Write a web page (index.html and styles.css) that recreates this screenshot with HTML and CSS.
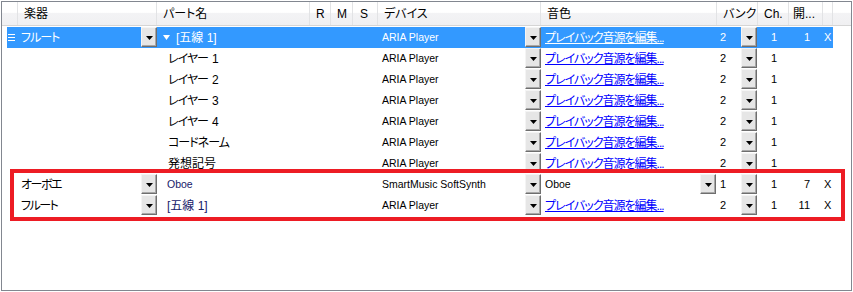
FILE: index.html
```html
<!DOCTYPE html>
<html lang="ja">
<head>
<meta charset="utf-8">
<link rel="stylesheet" href="styles.css">
</head>
<body>
<div class="grid-view">
  <div class="header">
    <div class="hc"></div>
    <div class="hc">楽器</div>
    <div class="hc">パート名</div>
    <div class="hc">R</div>
    <div class="hc">M</div>
    <div class="hc s">S</div>
    <div class="hc">デバイス</div>
    <div class="hc">音色</div>
    <div class="hc">バンク</div>
    <div class="hc">Ch.</div>
    <div class="hc narrow">開...</div>
    <div class="hc"></div>
    <div class="hc last"></div>
  </div>

  <div class="rows">
    <div class="row selected">
      <div class="cell inst"><svg class="grip" width="7" height="7" viewBox="0 0 7 7"><path d="M0 0.5H7M0 3.5H7M0 6.5H7" stroke="#fff" stroke-width="1"/></svg><span class="jp">フルート</span><span class="dd"><svg width="7" height="4" viewBox="0 0 7 4"><polygon points="0,0 7,0 3.5,4" fill="#000"/></svg></span></div>
      <div class="cell part"><svg class="tri" width="7" height="5" viewBox="0 0 7 5"><polygon points="0,0 7,0 3.5,5" fill="#fff"/></svg><span>[五線 1]</span></div>
      <div class="cell dev"><span class="lat">ARIA Player</span><span class="dd"><svg width="7" height="4" viewBox="0 0 7 4"><polygon points="0,0 7,0 3.5,4" fill="#000"/></svg></span></div>
      <div class="cell tone"><a class="link">プレイバック音源を編集...</a></div>
      <div class="cell bank"><span class="num">2</span><span class="dd"><svg width="7" height="4" viewBox="0 0 7 4"><polygon points="0,0 7,0 3.5,4" fill="#000"/></svg></span></div>
      <div class="cell ch num">1</div>
      <div class="cell open num">1</div>
      <div class="cell del num">X</div>
    </div>

    <div class="row">
      <div class="cell inst"></div>
      <div class="cell part child"><span class="kana">レイヤー</span><span class="idx">1</span></div>
      <div class="cell dev"><span class="lat">ARIA Player</span><span class="dd"><svg width="7" height="4" viewBox="0 0 7 4"><polygon points="0,0 7,0 3.5,4" fill="#000"/></svg></span></div>
      <div class="cell tone"><a class="link">プレイバック音源を編集...</a></div>
      <div class="cell bank"><span class="num">2</span><span class="dd"><svg width="7" height="4" viewBox="0 0 7 4"><polygon points="0,0 7,0 3.5,4" fill="#000"/></svg></span></div>
      <div class="cell ch num">1</div>
      <div class="cell open num"></div>
      <div class="cell del num"></div>
    </div>

    <div class="row">
      <div class="cell inst"></div>
      <div class="cell part child"><span class="kana">レイヤー</span><span class="idx">2</span></div>
      <div class="cell dev"><span class="lat">ARIA Player</span><span class="dd"><svg width="7" height="4" viewBox="0 0 7 4"><polygon points="0,0 7,0 3.5,4" fill="#000"/></svg></span></div>
      <div class="cell tone"><a class="link">プレイバック音源を編集...</a></div>
      <div class="cell bank"><span class="num">2</span><span class="dd"><svg width="7" height="4" viewBox="0 0 7 4"><polygon points="0,0 7,0 3.5,4" fill="#000"/></svg></span></div>
      <div class="cell ch num">1</div>
      <div class="cell open num"></div>
      <div class="cell del num"></div>
    </div>

    <div class="row">
      <div class="cell inst"></div>
      <div class="cell part child"><span class="kana">レイヤー</span><span class="idx">3</span></div>
      <div class="cell dev"><span class="lat">ARIA Player</span><span class="dd"><svg width="7" height="4" viewBox="0 0 7 4"><polygon points="0,0 7,0 3.5,4" fill="#000"/></svg></span></div>
      <div class="cell tone"><a class="link">プレイバック音源を編集...</a></div>
      <div class="cell bank"><span class="num">2</span><span class="dd"><svg width="7" height="4" viewBox="0 0 7 4"><polygon points="0,0 7,0 3.5,4" fill="#000"/></svg></span></div>
      <div class="cell ch num">1</div>
      <div class="cell open num"></div>
      <div class="cell del num"></div>
    </div>

    <div class="row">
      <div class="cell inst"></div>
      <div class="cell part child"><span class="kana">レイヤー</span><span class="idx">4</span></div>
      <div class="cell dev"><span class="lat">ARIA Player</span><span class="dd"><svg width="7" height="4" viewBox="0 0 7 4"><polygon points="0,0 7,0 3.5,4" fill="#000"/></svg></span></div>
      <div class="cell tone"><a class="link">プレイバック音源を編集...</a></div>
      <div class="cell bank"><span class="num">2</span><span class="dd"><svg width="7" height="4" viewBox="0 0 7 4"><polygon points="0,0 7,0 3.5,4" fill="#000"/></svg></span></div>
      <div class="cell ch num">1</div>
      <div class="cell open num"></div>
      <div class="cell del num"></div>
    </div>

    <div class="row">
      <div class="cell inst"></div>
      <div class="cell part child"><span class="kana">コードネーム</span></div>
      <div class="cell dev"><span class="lat">ARIA Player</span><span class="dd"><svg width="7" height="4" viewBox="0 0 7 4"><polygon points="0,0 7,0 3.5,4" fill="#000"/></svg></span></div>
      <div class="cell tone"><a class="link">プレイバック音源を編集...</a></div>
      <div class="cell bank"><span class="num">2</span><span class="dd"><svg width="7" height="4" viewBox="0 0 7 4"><polygon points="0,0 7,0 3.5,4" fill="#000"/></svg></span></div>
      <div class="cell ch num">1</div>
      <div class="cell open num"></div>
      <div class="cell del num"></div>
    </div>

    <div class="row">
      <div class="cell inst"></div>
      <div class="cell part child"><span>発想記号</span></div>
      <div class="cell dev"><span class="lat">ARIA Player</span><span class="dd"><svg width="7" height="4" viewBox="0 0 7 4"><polygon points="0,0 7,0 3.5,4" fill="#000"/></svg></span></div>
      <div class="cell tone"><a class="link">プレイバック音源を編集...</a></div>
      <div class="cell bank"><span class="num">2</span><span class="dd"><svg width="7" height="4" viewBox="0 0 7 4"><polygon points="0,0 7,0 3.5,4" fill="#000"/></svg></span></div>
      <div class="cell ch num">1</div>
      <div class="cell open num"></div>
      <div class="cell del num"></div>
    </div>

    <div class="row">
      <div class="cell inst"><span class="jp name">オーボエ</span><span class="dd"><svg width="7" height="4" viewBox="0 0 7 4"><polygon points="0,0 7,0 3.5,4" fill="#000"/></svg></span></div>
      <div class="cell part edit"><span class="lat">Oboe</span></div>
      <div class="cell dev"><span class="lat">SmartMusic SoftSynth</span><span class="dd"><svg width="7" height="4" viewBox="0 0 7 4"><polygon points="0,0 7,0 3.5,4" fill="#000"/></svg></span></div>
      <div class="cell tone"><span class="lat">Oboe</span><span class="dd tone-dd"><svg width="7" height="4" viewBox="0 0 7 4"><polygon points="0,0 7,0 3.5,4" fill="#000"/></svg></span></div>
      <div class="cell bank"><span class="num">1</span><span class="dd"><svg width="7" height="4" viewBox="0 0 7 4"><polygon points="0,0 7,0 3.5,4" fill="#000"/></svg></span></div>
      <div class="cell ch num">1</div>
      <div class="cell open num">7</div>
      <div class="cell del num">X</div>
    </div>

    <div class="row">
      <div class="cell inst"><span class="jp name">フルート</span><span class="dd"><svg width="7" height="4" viewBox="0 0 7 4"><polygon points="0,0 7,0 3.5,4" fill="#000"/></svg></span></div>
      <div class="cell part edit"><span>[五線 1]</span></div>
      <div class="cell dev"><span class="lat">ARIA Player</span><span class="dd"><svg width="7" height="4" viewBox="0 0 7 4"><polygon points="0,0 7,0 3.5,4" fill="#000"/></svg></span></div>
      <div class="cell tone"><a class="link">プレイバック音源を編集...</a></div>
      <div class="cell bank"><span class="num">2</span><span class="dd"><svg width="7" height="4" viewBox="0 0 7 4"><polygon points="0,0 7,0 3.5,4" fill="#000"/></svg></span></div>
      <div class="cell ch num">1</div>
      <div class="cell open num">11</div>
      <div class="cell del num">X</div>
    </div>
  </div>

  <div class="highlight"></div>
</div>
</body>
</html>
```

FILE: styles.css
```css
* { box-sizing: border-box; }

html, body {
  margin: 0;
  padding: 0;
  background: #fff;
}

body {
  font-family: "Liberation Sans", "Noto Sans CJK JP", sans-serif;
  font-size: 12px;
  font-feature-settings: "palt";
  color: #000;
}

.grid-view {
  position: relative;
  width: 851px;
  height: 290px;
  margin: 1px;
  border: 1px solid #828790;
  background: #fff;
}

.header {
  display: grid;
  grid-template-columns: 16px 139px 153px 21px 22px 25px 163px 176px 41px 31px 34px 10px 1fr;
  height: 24px;
  background: linear-gradient(#ffffff 0, #ffffff 45%, #f3f3f5 50%, #f0f0f2 100%);
  border-bottom: 1px solid #d5d5d5;
}

.hc {
  display: flex;
  align-items: center;
  padding-left: 6px;
  border-right: 1px solid #e2e3e5;
  white-space: nowrap;
  overflow: hidden;
  line-height: 1;
}

.hc.s { padding-left: 7px; }
.hc.narrow { padding-left: 4px; }
.hc.last { border-right: none; }

.rows {
  padding-top: 1px;
  padding-left: 5px;
}

.row {
  display: grid;
  grid-template-columns: 150px 221px 163px 176px 41px 31px 34px 10px;
  width: 826px;
  height: 21px;
}

.row.selected {
  background: #3399ff;
  color: #fff;
}

.cell {
  display: flex;
  align-items: center;
  height: 21px;
  white-space: nowrap;
  overflow: hidden;
  line-height: 1;
}

.jp, .kana, .link { letter-spacing: -1px; }
.jp.name { letter-spacing: -1.5px; }
.idx { margin-left: 4px; }

.inst { padding-left: 1px; }
.inst .grip { margin-right: 6px; }
.inst .name { margin-left: 13px; }

.part { padding-left: 6px; }
.part .tri { margin-right: 6px; }
.part.child { padding-left: 11px; }
.part.edit { padding-left: 10px; color: #16206a; }

.dev { padding-left: 4px; }
.tone { padding-left: 4px; }
.bank { padding-left: 3px; }

.dd {
  margin-left: auto;
  align-self: flex-start;
  width: 16px;
  height: 20px;
  flex: none;
  display: flex;
  align-items: center;
  justify-content: center;
  background: #e6e6e6;
  border-style: solid;
  border-width: 1px;
  border-color: #f4f4f4 #6e6e6e #6e6e6e #f4f4f4;
  box-shadow: inset -1px -1px 0 #a8a8a8;
  letter-spacing: 0;
}

.dd svg { display: block; margin-top: 1px; }

.tone-dd { margin-right: 1px; }
.bank .dd { margin-right: 1px; }

.lat {
  font-size: 10.5px;
}

.num {
  font-size: 11px;
}

.ch { justify-content: center; padding-left: 1px; }
.open { justify-content: flex-end; padding-right: 13px; }
.del { padding-left: 1px; }

.link {
  color: #0000ff;
  text-decoration: underline;
  cursor: pointer;
}

.selected .link { color: #fff; }

.highlight {
  position: absolute;
  left: 8px;
  top: 167px;
  width: 835px;
  height: 52px;
  border: 4px solid #ed1c24;
  pointer-events: none;
}
```
